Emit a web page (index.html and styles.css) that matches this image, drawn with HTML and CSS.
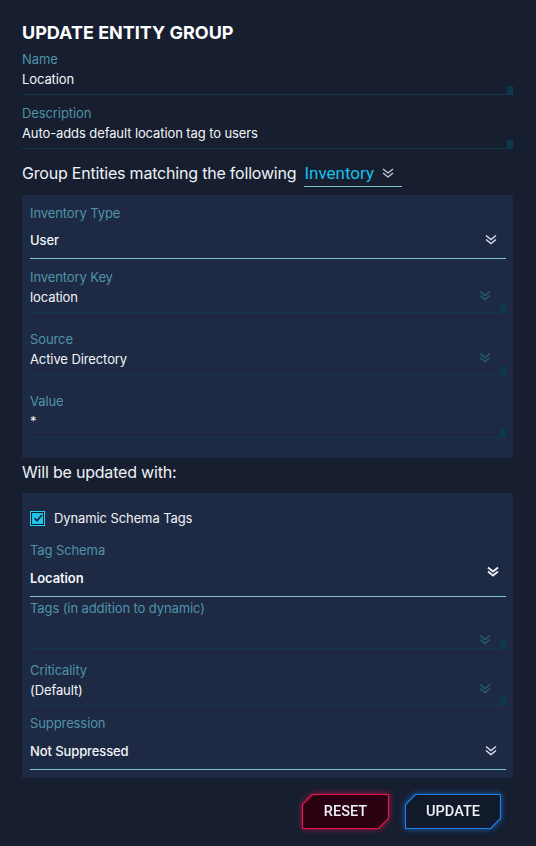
FILE: index.html
```html
<!DOCTYPE html>
<html>
<head>
<meta charset="utf-8">
<link rel="stylesheet" href="styles.css">
</head>
<body>
<div class="page">
  <h1 class="title">UPDATE ENTITY GROUP</h1>

  <div class="field input top-field">
    <div class="label">Name</div>
    <div class="value">Location</div>
  </div>
  <div class="field input top-field desc">
    <div class="label">Description</div>
    <div class="value">Auto-adds default location tag to users</div>
  </div>

  <div class="match-row">
    <span class="match-text">Group Entities matching the following</span>
    <span class="match-select">Inventory
      <svg class="chev small" viewBox="0 0 12 10"><path d="M1 1l5 4 5-4M1 5l5 4 5-4" fill="none" stroke="#c9d6e3" stroke-width="1.2"/></svg>
    </span>
  </div>

  <section class="panel panel-one">
    <div class="field select">
      <div class="label">Inventory Type</div>
      <div class="value">User
        <svg class="chev" viewBox="0 0 12 10"><path d="M1 1l5 4 5-4M1 5l5 4 5-4" fill="none" stroke="#d8e2ec" stroke-width="1.4"/></svg>
      </div>
    </div>
    <div class="field input has-chev k1">
      <div class="label">Inventory Key</div>
      <div class="value">location
        <svg class="chev dim" viewBox="0 0 12 10"><path d="M1 1l5 4 5-4M1 5l5 4 5-4" fill="none" stroke="#1f5f76" stroke-width="1.4"/></svg>
      </div>
    </div>
    <div class="field input has-chev k2">
      <div class="label">Source</div>
      <div class="value">Active Directory
        <svg class="chev dim" viewBox="0 0 12 10"><path d="M1 1l5 4 5-4M1 5l5 4 5-4" fill="none" stroke="#1f5f76" stroke-width="1.4"/></svg>
      </div>
    </div>
    <div class="field input k3">
      <div class="label">Value</div>
      <div class="value star">*</div>
    </div>
  </section>

  <div class="section-title">Will be updated with:</div>

  <section class="panel panel-two">
    <label class="check-row">
      <span class="checkbox">
        <svg viewBox="0 0 12 12"><path d="M2.5 6.3l2.5 2.6 4.8-6" fill="none" stroke="#0d1b2a" stroke-width="1.6"/></svg>
      </span>
      <span class="check-label">Dynamic Schema Tags</span>
    </label>
    <div class="field select s1">
      <div class="label">Tag Schema</div>
      <div class="value">Location
        <svg class="chev bold" viewBox="0 0 12 10"><path d="M1 1l5 4 5-4M1 5l5 4 5-4" fill="none" stroke="#eef3f8" stroke-width="1.8"/></svg>
      </div>
    </div>
    <div class="field input has-chev tags">
      <div class="label">Tags (in addition to dynamic)</div>
      <div class="value empty">
        <svg class="chev dim" viewBox="0 0 12 10"><path d="M1 1l5 4 5-4M1 5l5 4 5-4" fill="none" stroke="#1f5f76" stroke-width="1.4"/></svg>
      </div>
    </div>
    <div class="field input has-chev crit">
      <div class="label">Criticality</div>
      <div class="value">(Default)
        <svg class="chev dim" viewBox="0 0 12 10"><path d="M1 1l5 4 5-4M1 5l5 4 5-4" fill="none" stroke="#1f5f76" stroke-width="1.4"/></svg>
      </div>
    </div>
    <div class="field select supp">
      <div class="label">Suppression</div>
      <div class="value">Not Suppressed
        <svg class="chev" viewBox="0 0 12 10"><path d="M1 1l5 4 5-4M1 5l5 4 5-4" fill="none" stroke="#d8e2ec" stroke-width="1.4"/></svg>
      </div>
    </div>
  </section>

  <div class="actions">
    <button class="btn btn-reset">
      <svg class="btn-shape" viewBox="0 0 87 35" preserveAspectRatio="none"><polygon points="10.5,0.5 86.5,0.5 86.5,24.5 76.5,34.5 0.5,34.5 0.5,10.5" fill="#2b0010" stroke="#e5164e" stroke-width="1.2"/></svg>
      <span>RESET</span>
    </button>
    <button class="btn btn-update">
      <svg class="btn-shape" viewBox="0 0 96 35" preserveAspectRatio="none"><polygon points="10.5,0.5 95.5,0.5 95.5,24.5 85.5,34.5 0.5,34.5 0.5,10.5" fill="#111a2b" stroke="#1d7ff2" stroke-width="1.2"/></svg>
      <span>UPDATE</span>
    </button>
  </div>
</div>
</body>
</html>
```
FILE: styles.css
```css
* { box-sizing: border-box; }
html, body { margin: 0; padding: 0; }
body {
  background: #161e2f;
  font-family: "Inter", "Liberation Sans", sans-serif;
  color: #eef2f6;
  width: 536px;
  height: 846px;
  overflow: hidden;
}
.page {
  padding: 22px 23px 0 22px;
  display: flex;
  flex-direction: column;
}
.title {
  margin: 0;
  font-size: 18px;
  font-weight: 700;
  line-height: 22px;
  letter-spacing: 0;
  color: #ffffff;
}
.field {
  position: relative;
  display: flex;
  flex-direction: column;
}
.label {
  font-size: 13px;
  line-height: 16px;
  color: #4f93a8;
  letter-spacing: -0.1px;
}
.value {
  position: relative;
  font-size: 13px;
  line-height: 16px;
  color: #f2f5f8;
  letter-spacing: -0.1px;
}
.field.input {
  border-bottom: 1px solid #0d3a4c;
}
.field.input::after {
  content: "";
  position: absolute;
  right: 0;
  bottom: -1px;
  width: 6px;
  height: 9px;
  background: #0c3a4c;
}
.field.input .label { margin-bottom: 4px; }
.field.input .value { padding-bottom: 7px; }

.top-field { margin-top: 7px; }
.top-field .label { margin-bottom: 5px; }
.top-field .value { padding-bottom: 7px; }
.top-field.desc { margin-top: 10px; }

.field.select { border-bottom: 1px solid #7dc1d5; }
.field.select .label { margin-bottom: 11px; }
.field.select .value { padding-bottom: 10px; font-weight: 500; }

.chev {
  position: absolute;
  right: 9px;
  top: 2px;
  width: 12px;
  height: 11px;
}
.chev.dim { right: 15px; top: 1px; }
.chev.bold { top: -4px; right: 7px; }

.match-row {
  margin-top: 14px;
  display: flex;
  align-items: flex-start;
  gap: 8px;
}
.match-text {
  font-size: 16px;
  line-height: 20px;
  letter-spacing: -0.2px;
  color: #eef2f6;
}
.match-select {
  font-family: "Roboto", "Liberation Sans", sans-serif;
  font-size: 17px;
  line-height: 20px;
  color: #1cc0e9;
  border-bottom: 1px solid #7dc1d5;
  padding-right: 28px;
  padding-bottom: 3px;
  position: relative;
}
.match-select .chev.small {
  right: 8px;
  top: 5px;
  width: 12px;
  height: 10px;
}

.panel {
  background: #1e2a44;
  padding: 0 7px 0 8px;
  display: flex;
  flex-direction: column;
}
.panel-one {
  margin-top: 8px;
  padding-top: 10px;
  padding-bottom: 20px;
}
.panel-one .k1 { margin-top: 10px; }
.panel-one .k2 { margin-top: 18px; }
.panel-one .k3 { margin-top: 18px; }
.panel-one .k3 .value { padding-bottom: 8px; }

.section-title {
  margin-top: 4px;
  font-size: 16px;
  line-height: 20px;
  letter-spacing: -0.2px;
  color: #eef2f6;
}

.panel-two {
  margin-top: 11px;
  padding-top: 17px;
  padding-bottom: 8px;
}
.check-row {
  display: flex;
  align-items: center;
  gap: 9px;
  height: 16px;
}
.checkbox {
  width: 15px;
  height: 15px;
  background: #1ec3ec;
  border: 1px solid #26d0f7;
  box-shadow: inset 0 0 0 1px #0d1b2a;
  display: flex;
  align-items: center;
  justify-content: center;
}
.checkbox svg { width: 12px; height: 12px; }
.check-label {
  font-size: 13px;
  color: #eef2f6;
  letter-spacing: -0.1px;
}
.panel-two .s1 { margin-top: 16px; }
.panel-two .s1 .label { margin-bottom: 12px; }
.panel-two .s1 .value { font-weight: 600; padding-bottom: 10px; }
.panel-two .tags { margin-top: 3px; }
.panel-two .tags .label { margin-bottom: 14px; }
.panel-two .tags .value { height: 18px; padding-bottom: 0; }
.panel-two .tags .chev.dim { top: 4px; }
.panel-two .crit { margin-top: 13px; }
.panel-two .supp { margin-top: 9px; }
.panel-two .supp .label { margin-bottom: 12px; }
.panel-two .supp .value { padding-bottom: 10px; }

.actions {
  display: flex;
  justify-content: flex-end;
  gap: 16px;
  margin-top: 16px;
  padding-right: 12px;
}
.btn {
  position: relative;
  height: 35px;
  border: 0;
  background: transparent;
  padding: 0;
  font-family: "Roboto", "Liberation Sans", sans-serif;
  font-size: 14.5px;
  font-weight: 500;
  color: #eef2f6;
  display: flex;
  align-items: center;
  justify-content: center;
}
.btn-reset { width: 87px; filter: drop-shadow(0 0 3px rgba(229, 22, 78, 0.7)); }
.btn-update { width: 96px; filter: drop-shadow(0 0 3px rgba(29, 127, 242, 0.7)); }
.btn-shape {
  position: absolute;
  inset: 0;
  width: 100%;
  height: 100%;
}
.btn span { position: relative; }
```
